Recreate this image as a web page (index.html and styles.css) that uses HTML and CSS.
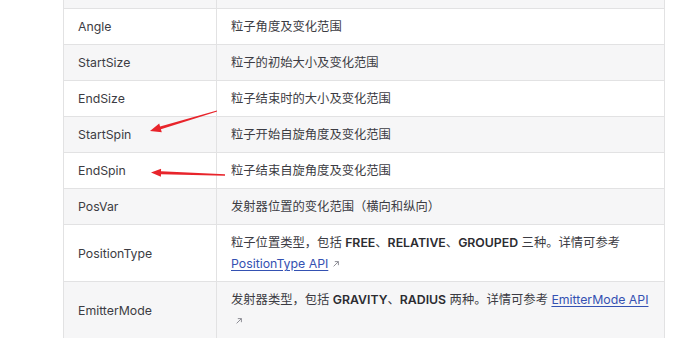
FILE: index.html
```html
<!DOCTYPE html>
<html lang="zh-CN">
<head>
    <meta charset="UTF-8">
    <meta name="viewport" content="width=device-width, initial-scale=1.0">
    <title>粒子系统属性</title>
    <link rel="stylesheet" href="styles.css">
</head>
<body>
    <div class="doc">
        <table class="props">
            <tr class="lead"><td></td><td></td></tr>
            <tr><td>Angle</td><td>粒子角度及变化范围</td></tr>
            <tr><td>StartSize</td><td>粒子的初始大小及变化范围</td></tr>
            <tr><td>EndSize</td><td>粒子结束时的大小及变化范围</td></tr>
            <tr><td>StartSpin</td><td>粒子开始自旋角度及变化范围</td></tr>
            <tr><td>EndSpin</td><td>粒子结束自旋角度及变化范围</td></tr>
            <tr><td>PosVar</td><td>发射器位置的变化范围（横向和纵向）</td></tr>
            <tr>
                <td>PositionType</td>
                <td>粒子位置类型，包括 <strong>FREE</strong>、<strong>RELATIVE</strong>、<strong>GROUPED</strong> 三种。详情可参考 <a href="#">PositionType API</a><span class="ext"><svg viewBox="0 0 10 10" width="8" height="8"><path d="M2 8 L8 2 M3.5 2 H8 V6.5" fill="none" stroke="currentColor" stroke-width="1.2"/></svg></span></td>
            </tr>
            <tr>
                <td>EmitterMode</td>
                <td>发射器类型，包括 <strong>GRAVITY</strong>、<strong>RADIUS</strong> 两种。详情可参考 <a href="#">EmitterMode API</a><span class="ext"><svg viewBox="0 0 10 10" width="8" height="8"><path d="M2 8 L8 2 M3.5 2 H8 V6.5" fill="none" stroke="currentColor" stroke-width="1.2"/></svg></span></td>
            </tr>
        </table>
    </div>

    <!-- annotation arrows -->
    <svg class="marks" width="690" height="338" viewBox="0 0 690 338">
        <path d="M150 131 L161.8 132.2 L160.9 129.2 L217.1 111.6 L216.9 110.4 L160.1 126.6 L159.2 123.6 Z" fill="#e8242b"/>
        <path d="M151 172.5 L160.9 176.8 L161 174.3 L225 175.7 L225 174.3 L161 171.3 L161.1 168.8 Z" fill="#e8242b"/>
    </svg>
</body>
</html>
```

FILE: styles.css
```css
body {
    margin: 0;
    background-color: #ffffff;
    font-family: Inter, "Noto Sans CJK SC", sans-serif;
    font-size: 12.3px;
    line-height: 21px;
    color: #3c3c43;
    overflow: hidden;
}
.doc {
    padding-left: 63px;
    margin-top: -28px;
}
.props {
    border-collapse: collapse;
    width: 602px;
}
.props td {
    border: 1px solid #e2e2e3;
    padding: 7px 14px;
    vertical-align: middle;
}
.props td:first-child {
    width: 124px;
}
.props .lead td {
    height: 21px;
}
.props tr:nth-child(odd) {
    background-color: #f6f6f7;
}
.props strong {
    font-weight: 600;
    color: #2c2c31;
}
.props a {
    color: #3451b2;
    text-decoration: underline;
    text-underline-offset: 2px;
}
.ext {
    display: inline-block;
    margin-left: 4px;
    color: #8a8a92;
}
.marks {
    position: absolute;
    left: 0;
    top: 0;
    pointer-events: none;
}
```
